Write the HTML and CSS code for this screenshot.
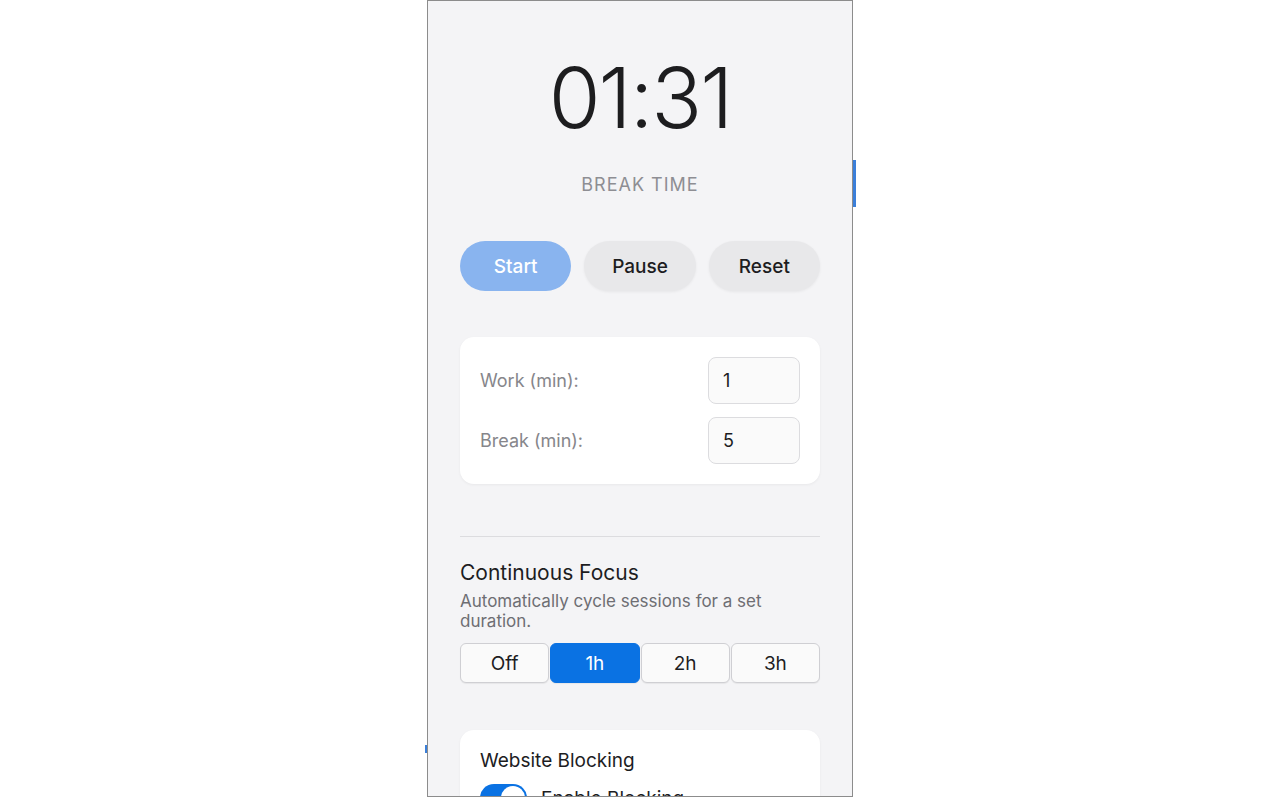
FILE: index.html
```html
<!DOCTYPE html>
<html lang="en">
<head>
  <meta charset="UTF-8" />
  <meta name="viewport" content="width=device-width, initial-scale=1" />
  <title>Focus Timer</title>
  <link rel="stylesheet" href="styles.css">
</head>
<body>

  <!-- bits of the tab behind the popup -->
  <div class="backdrop">
    <span class="peek peek-right"></span>
    <span class="peek peek-left"></span>
  </div>

  <main class="popup">
    <div class="timer" id="timer">01:31</div>
    <div class="phase" id="phase">BREAK TIME</div>

    <div class="controls">
      <button class="btn btn-start" disabled>Start</button>
      <button class="btn">Pause</button>
      <button class="btn">Reset</button>
    </div>

    <section class="card settings">
      <div class="setting-row">
        <label for="work">Work (min):</label>
        <input id="work" type="text" inputmode="numeric" value="1">
      </div>
      <div class="setting-row">
        <label for="break">Break (min):</label>
        <input id="break" type="text" inputmode="numeric" value="5">
      </div>
    </section>

    <hr class="divider">

    <section class="focus">
      <h3>Continuous Focus</h3>
      <p>Automatically cycle sessions for a set duration.</p>
      <div class="segmented">
        <button class="seg">Off</button>
        <button class="seg active">1h</button>
        <button class="seg">2h</button>
        <button class="seg">3h</button>
      </div>
    </section>

    <section class="card blocking">
      <h3>Website Blocking</h3>
      <label class="switch-row">
        <span class="switch"><span class="knob"></span></span>
        Enable Blocking
      </label>
    </section>
  </main>

</body>
</html>
```

FILE: styles.css
```css
* {
  box-sizing: border-box;
  margin: 0;
  padding: 0;
}

body {
  font-family: Inter, 'Noto Sans', sans-serif;
  background: #fff;
  color: #1d1d1f;
  height: 800px;
  overflow: hidden;
  position: relative;
}

.backdrop .peek {
  position: absolute;
  background: #3b7fd9;
}

.peek-right {
  left: 853px;
  top: 160px;
  width: 3px;
  height: 47px;
}

.peek-left {
  left: 425px;
  top: 745px;
  width: 2px;
  height: 8px;
}

.popup {
  position: relative;
  width: 426px;
  height: 797px;
  margin: 0 auto;
  padding: 55px 32px 0;
  background: #f4f4f6;
  border: 1px solid #8c8c8c;
  overflow: hidden;
}

.timer {
  font-size: 84px;
  font-weight: 300;
  line-height: 1;
  text-align: center;
  color: #1d1d1f;
  letter-spacing: -2px;
}

.phase {
  margin-top: 34px;
  font-size: 18px;
  line-height: 21px;
  letter-spacing: 1px;
  text-align: center;
  color: #8e8e93;
}

.controls {
  display: flex;
  gap: 13px;
  margin-top: 46px;
}

.btn {
  flex: 1;
  height: 50px;
  border: none;
  border-radius: 25px;
  background: #e8e8ea;
  color: #1d1d1f;
  font-family: inherit;
  font-size: 19px;
  font-weight: 500;
  box-shadow: 0 1px 3px rgba(0, 0, 0, 0.06);
  cursor: pointer;
}

.btn-start {
  background: #89b4ef;
  color: #fff;
  box-shadow: none;
}

.card {
  background: #fff;
  border-radius: 14px;
  padding: 20px;
  box-shadow: 0 1px 3px rgba(0, 0, 0, 0.05);
}

.settings {
  margin-top: 46px;
  display: flex;
  flex-direction: column;
  gap: 13px;
}

.setting-row {
  display: flex;
  align-items: center;
  justify-content: space-between;
}

.setting-row label {
  font-size: 18px;
  color: #86868b;
}

.setting-row input {
  width: 92px;
  height: 47px;
  padding-left: 14px;
  border: 1px solid #dcdcdf;
  border-radius: 8px;
  background: #fafafa;
  font-family: inherit;
  font-size: 18px;
  color: #1d1d1f;
  outline: none;
}

.divider {
  margin-top: 52px;
  border: none;
  border-top: 1px solid #dcdcdf;
}

.focus {
  margin-top: 24px;
}

.focus h3 {
  font-size: 21px;
  line-height: 24px;
  font-weight: 400;
  color: #1d1d1f;
}

.focus p {
  margin-top: 6px;
  font-size: 17px;
  line-height: 20px;
  color: #6e6e73;
}

.segmented {
  display: flex;
  gap: 1px;
  margin-top: 12px;
}

.seg {
  flex: 1;
  height: 40px;
  border: 1px solid #cfcfd3;
  border-radius: 6px;
  background: #fafafa;
  color: #1d1d1f;
  font-family: inherit;
  font-size: 19px;
  box-shadow: 0 1px 1px rgba(0, 0, 0, 0.06);
  cursor: pointer;
}

.seg.active {
  background: #0a72e3;
  border-color: #0a72e3;
  color: #fff;
}

.blocking {
  margin-top: 47px;
}

.blocking h3 {
  font-size: 19px;
  line-height: 22px;
  font-weight: 400;
  color: #1d1d1f;
}

.switch-row {
  display: flex;
  align-items: center;
  gap: 14px;
  margin-top: 12px;
  font-size: 19px;
}

.switch {
  position: relative;
  width: 47px;
  height: 28px;
  border-radius: 14px;
  background: #0a72e3;
}

.knob {
  position: absolute;
  top: 2px;
  right: 2px;
  width: 24px;
  height: 24px;
  border-radius: 50%;
  background: #fff;
}
```
